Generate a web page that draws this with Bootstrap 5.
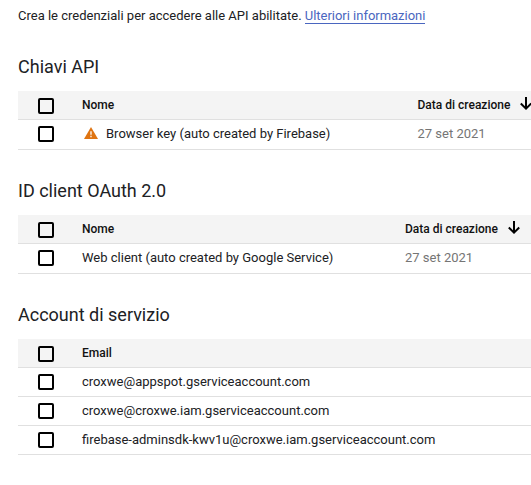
<!DOCTYPE html>
<html lang="it">
<head>
<meta charset="utf-8">
<title>Credenziali</title>
<link href="https://cdn.jsdelivr.net/npm/bootstrap@5.3.0/dist/css/bootstrap.min.css" rel="stylesheet">
<style>
body{font-family:Roboto,"Liberation Sans",sans-serif;font-size:13px;line-height:20px;color:#202124;background:#fff;overflow:hidden}
.intro{padding-top:6px;height:55px;white-space:nowrap}
.intro a{color:#4a66c0;text-decoration:none;border-bottom:1px solid #4a66c0;display:inline-block;line-height:15px;letter-spacing:-.02px}
.page{padding-left:18px}
.title{font-size:18px;line-height:24px;height:36px;font-weight:400;margin:0}
.block{margin-bottom:29px}
.line{height:29px;border-bottom:1px solid #e0e0e0;padding-left:20px;white-space:nowrap}
.line.tall{height:30px}
.line.top-line{background:#f4f4f4;font-size:12px;font-weight:500;color:#111}
.box{appearance:none;width:16px;height:16px;border:2px solid #000;border-radius:2px;background:#fff;margin:6px 28px 0 0;flex:none}
.top-line .box{margin-top:7px;background:transparent}
.label{padding-top:4px;line-height:20px}
.first{width:335.5px;flex:none}
.first.narrow{width:323px}
.date{color:#757575}
.warn{width:14px;height:12px;margin:7px 8px 0 2px;flex:none}
.arrow{width:12px;height:14px;margin:6px 0 0 10px;flex:none}
</style>
<script src="https://cdn.jsdelivr.net/npm/bootstrap@5.3.0/dist/js/bootstrap.bundle.min.js"></script>
</head>
<body>
<main class="page">
  <p class="intro mb-0"><span>Crea le credenziali per accedere alle API abilitate.</span> <a href="#">Ulteriori informazioni</a></p>

  <section class="block">
    <h2 class="title">Chiavi API</h2>
    <div class="line top-line d-flex"><input type="checkbox" class="box"><div class="first label">Nome</div><div class="label">Data di creazione</div>
      <svg class="arrow" viewBox="0 0 12 14"><path d="M6 0V12M.8 6.500 6 11.700l5.200-5.200" fill="none" stroke="#000" stroke-width="2"/></svg></div>
    <div class="line tall d-flex"><input type="checkbox" class="box"><div class="first d-flex">
      <svg class="warn" viewBox="0 0 14 12"><path d="M7 0 14 12H0Z" fill="#df7412"/><path d="M7 4.200V7.800M7 8.800V10.200" stroke="#fff" stroke-width="1.300"/></svg><span class="label">Browser key (auto created by Firebase)</span></div><div class="label date">27 set 2021</div></div>
  </section>

  <section class="block">
    <h2 class="title">ID client OAuth 2.0</h2>
    <div class="line top-line d-flex"><input type="checkbox" class="box"><div class="first narrow label">Nome</div><div class="label">Data di creazione</div>
      <svg class="arrow" viewBox="0 0 12 14"><path d="M6 0V12M.8 6.500 6 11.700l5.200-5.200" fill="none" stroke="#000" stroke-width="2"/></svg></div>
    <div class="line tall d-flex"><input type="checkbox" class="box"><div class="first narrow label">Web client (auto created by Google Service)</div><div class="label date">27 set 2021</div></div>
  </section>

  <section class="block">
    <h2 class="title">Account di servizio</h2>
    <div class="line top-line d-flex"><input type="checkbox" class="box"><div class="label">Email</div></div>
    <div class="line d-flex"><input type="checkbox" class="box"><div class="label">croxwe@appspot.gserviceaccount.com</div></div>
    <div class="line d-flex"><input type="checkbox" class="box"><div class="label">croxwe@croxwe.iam.gserviceaccount.com</div></div>
    <div class="line d-flex"><input type="checkbox" class="box"><div class="label">firebase-adminsdk-kwv1u@croxwe.iam.gserviceaccount.com</div></div>
  </section>
</main>
</body>
</html>
